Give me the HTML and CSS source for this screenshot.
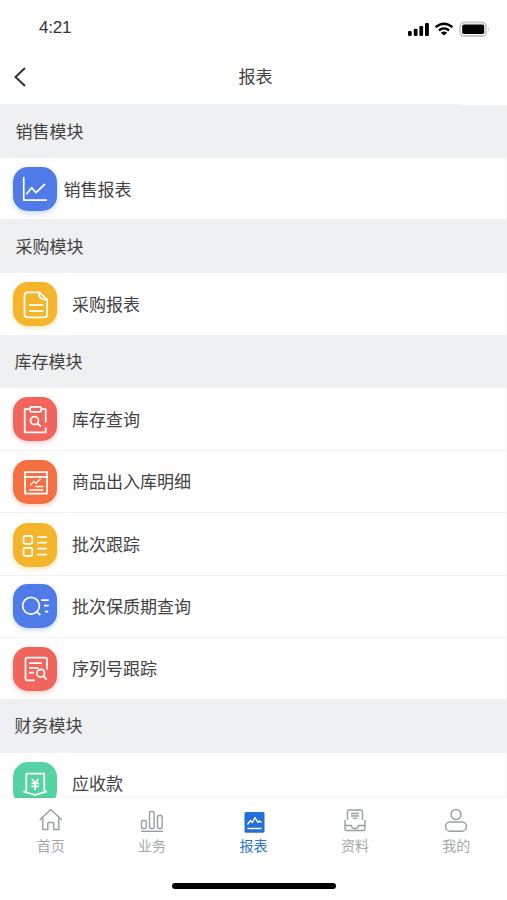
FILE: index.html
```html
<!DOCTYPE html>
<html lang="zh-CN">
<head>
<meta charset="UTF-8">
<title>报表</title>
<link rel="stylesheet" href="styles.css">
</head>
<body>
<div class="app">
  <div class="status">
    <span class="time">4:21</span>
    <svg class="indicators" width="84" height="18" viewBox="0 0 84 18">
      <g><rect x="1" y="11" width="3.7" height="5" rx="1.2"/><rect x="6.8" y="8.7" width="3.7" height="7.3" rx="1.2"/><rect x="12.4" y="6" width="3.7" height="10" rx="1.2"/><rect x="18" y="3" width="3.9" height="13" rx="1.2"/></g>
      <g fill="none" stroke="#000" stroke-width="2.3"><path d="M28.5 7.2Q37 .2 45.500 7.2"/><path d="M32 10.500Q37 6.300 42 10.500"/></g>
      <path d="M33.800 12.700Q37 10.200 40.200 12.700L37 15.500Z"/>
      <rect x="53.200" y="2.500" width="26" height="13.500" rx="4" fill="#fff" stroke="#c9c9c9" stroke-width="1.800"/>
      <rect x="55.200" y="4.500" width="22" height="9.500" rx="1.800"/>
      <path d="M81 7.200q1.800 2 0 4z" fill="#999"/>
    </svg>
  </div>
  <header class="header">
    <svg class="back" width="14" height="22" viewBox="0 0 14 22"><path d="M12 2 2.500 11 12 20"/></svg>
    <h1>报表</h1>
  </header>
  <main class="list">
    <h2 class="first">销售模块</h2>
    <div class="row tight"><span class="tile blue"><svg viewBox="0 0 44 44"><path d="M10.700 10v23.200H34M13.300 27.300l5.400-6.600 4.300 5 9-8.700"/></svg></span>销售报表</div>
    <h2>采购模块</h2>
    <div class="row"><span class="tile yellow"><svg viewBox="0 0 44 44"><path d="M26.300 10.300H14.500q-3 0-3 3v19q0 3 3 3h16.700q3 0 3-3V17.700zM26.300 10.300q-1.300 8 7.900 7.400M16 23h14.300M16 29h14.300"/></svg></span>采购报表</div>
    <h2 class="shift">库存模块</h2>
    <div class="row high"><span class="tile red"><svg viewBox="0 0 44 44"><path d="M17 12h-5.300v23.300h21V30.500M28 12h4.700v13.500"/><rect x="17" y="9.800" width="11.300" height="5" rx="1.500"/><circle cx="21.500" cy="23.600" r="4"/><path d="m24.500 26.500 3.500 3.200"/></svg></span>库存查询</div>
    <div class="row lined high"><span class="tile orange"><svg viewBox="0 0 44 44"><path d="M12 12h22v21.700H12zM12 16.800h22"/><path class="fine" d="m17.300 25.300 3.400-4 2.300 2 4.700-4.600M22.300 26.500h8M16.300 30h14"/></svg></span>商品出入库明细</div>
    <div class="row lined high low"><span class="tile yellow"><svg viewBox="0 0 44 44"><rect x="10.500" y="12.800" width="8.700" height="8" rx="1.500"/><rect x="10.500" y="24.800" width="8.700" height="8" rx="1.500"/><path d="M24.300 14H34M24.300 19.700H34M24.300 25.700H34M24.300 31.500H34"/></svg></span>批次跟踪</div>
    <div class="row lined high"><span class="tile blue"><svg viewBox="0 0 44 44"><circle cx="18" cy="21.800" r="8.400"/><path d="m24 28 3.300 3M28 16h7.700M31 21.500h4.700M32 27.500h3.300"/></svg></span>批次保质期查询</div>
    <div class="row lined high"><span class="tile red"><svg viewBox="0 0 44 44"><path d="M22 33.300h-7.500q-2 0-2-2V12.500q0-2 2-2H32q2 0 2 2v10M16 16.200h13M16 20.800h9.500M16 25.500h5"/><circle cx="27.700" cy="26.200" r="3.900"/><path d="m30.500 29.200 3.200 3.500"/></svg></span>序列号跟踪</div>
    <h2 class="shift">财务模块</h2>
    <div class="row high"><span class="tile green"><svg viewBox="0 0 44 44"><path d="M13.300 29V11.700h18V29M10.300 29.300 22 33l12-3.700"/><path d="m19 17 3.200 4.300L25.300 17M18.500 21.300h7.500M18.500 24.300h7.500M22.200 21v7"/></svg></span>应收款</div>
  </main>
  <nav class="tabs">
    <div class="tab"><svg viewBox="0 0 26 26"><path d="M1.800 13 12.800 2.500 23.800 13M4.800 11v11.500h5v-6q0-1 1-1h4q1 0 1 1v6h5V11"/></svg>首页</div>
    <div class="tab"><svg viewBox="0 0 26 26"><rect x="2.500" y="13.500" width="4.600" height="8" rx="1.500"/><rect x="10.500" y="4.500" width="4.600" height="17" rx="1.500"/><rect x="18.500" y="8.500" width="4.600" height="13" rx="1.500"/><path d="M2 24.300h22"/></svg>业务</div>
    <div class="tab active"><svg viewBox="0 0 26 26"><rect class="solid" x="4.500" y="5" width="20" height="20.700" rx="1.500"/><path class="white" d="m7.500 17.500 3-4 2 2 2.500-5 3 5 1.500-1.500 2 1.500M7.500 21.500h14"/></svg>报表</div>
    <div class="tab"><svg viewBox="0 0 26 26"><path d="M5.500 13V4.500Q5.500 3 7 3h12q1.500 0 1.500 1.500V13M3 13v9q0 1.500 1.500 1.500h17q1.500 0 1.500-1.500v-9M3 18.500h6.500q0 3 3.500 3t3.500-3H23M9 6.500h8M9 9h8M11 11.400h4"/></svg>资料</div>
    <div class="tab"><svg viewBox="0 0 26 26"><circle cx="13" cy="7.500" r="5"/><rect x="2.500" y="15" width="21" height="9.200" rx="4.600"/></svg>我的</div>
  </nav>
  <div class="home-bar"></div>
</div>
</body>
</html>
```
FILE: styles.css
```css
* { box-sizing: border-box; }
body {
  margin: 0;
  background: #fff;
  color: #424242;
  font-family: "Liberation Sans", "Noto Sans CJK SC", sans-serif;
}
.app { display: flex; flex-direction: column; height: 900px; overflow: hidden; }
.status {
  display: flex;
  justify-content: space-between;
  align-items: center;
  height: 54px;
  padding: 0 16px 0 39px;
}
.time { padding-top: 1px; font-size: 17px; line-height: 20px; letter-spacing: -.2px; color: #333; }
.indicators { margin-top: 4px; }
.header {
  display: grid;
  grid-template-columns: 40px 1fr 37px;
  align-items: center;
  height: 50px;
  padding: 0 12px 4px 13px;
}
.back { fill: none; stroke: #333; stroke-width: 2; }
h1 { margin: 0; padding-top: 2px; font-size: 17px; font-weight: 400; line-height: 24px; text-align: center; }
.list { height: 694px; overflow: hidden; }
h2 {
  height: 53.5px;
  margin: 0;
  padding-left: 15.5px;
  background: #eff0f2;
  font-size: 17px;
  font-weight: 400;
  line-height: 57px;
}
h2.first { background: linear-gradient(#fff, #fff) 100% 0 / 47px 1px no-repeat #eff0f2; }
h2.shift { padding-left: 14.500px; line-height: 55px; }
.row {
  display: flex;
  align-items: center;
  gap: 15px;
  height: 61.9px;
  padding-left: 13px;
  border-right: 1px solid #f4f4f5;
  font-size: 17px;
}
.row.tight { gap: 6.500px; padding-top: 1px; }
.row.high { padding-bottom: 2px; }
.row.lined { height: 62.3px; border-top: 1px solid #f1f2f3; }
.tile { width: 44px; height: 44px; border-radius: 15px; }
.high .tile { margin-top: 2px; }
.low .tile { margin-top: 3px; }
.tile svg {
  display: block;
  fill: none;
  stroke: #fff;
  stroke-width: 1.75;
  stroke-linejoin: round;
}
.tile .fine { stroke-width: 1.3; }
.blue { background: #4e7be8; box-shadow: 0 2px 5px #4e7be855; }
.yellow { background: #f4b52a; box-shadow: 0 2px 5px #f4b52a55; }
.red { background: #f2655c; box-shadow: 0 2px 5px #f2655c55; }
.orange { background: #f66f42; box-shadow: 0 2px 5px #f66f4255; }
.green { background: #56d3a3; }
.tabs {
  position: relative;
  display: grid;
  grid-template-columns: repeat(5, 1fr);
  height: 85px;
  padding-top: 9px;
  background: #fff;
  box-shadow: 0 -1px 5px #0000000f;
  clip-path: inset(-8px 0 0 0);
}
.tab {
  display: flex;
  flex-direction: column;
  align-items: center;
  color: #a4a7ac;
  font-size: 14px;
  line-height: 20px;
}
.tab svg {
  width: 26px;
  height: 26px;
  margin-bottom: 3px;
  fill: none;
  stroke: #999da5;
  stroke-width: 1.4;
  stroke-linejoin: round;
}
.tab.active { color: #2b75dc; }
.tab .solid { fill: #2470d8; stroke: none; }
.tab .white { stroke: #fff; }
.home-bar {
  width: 164px;
  height: 6px;
  margin: 0 auto;
  border-radius: 3px;
  background: #000;
}
```
